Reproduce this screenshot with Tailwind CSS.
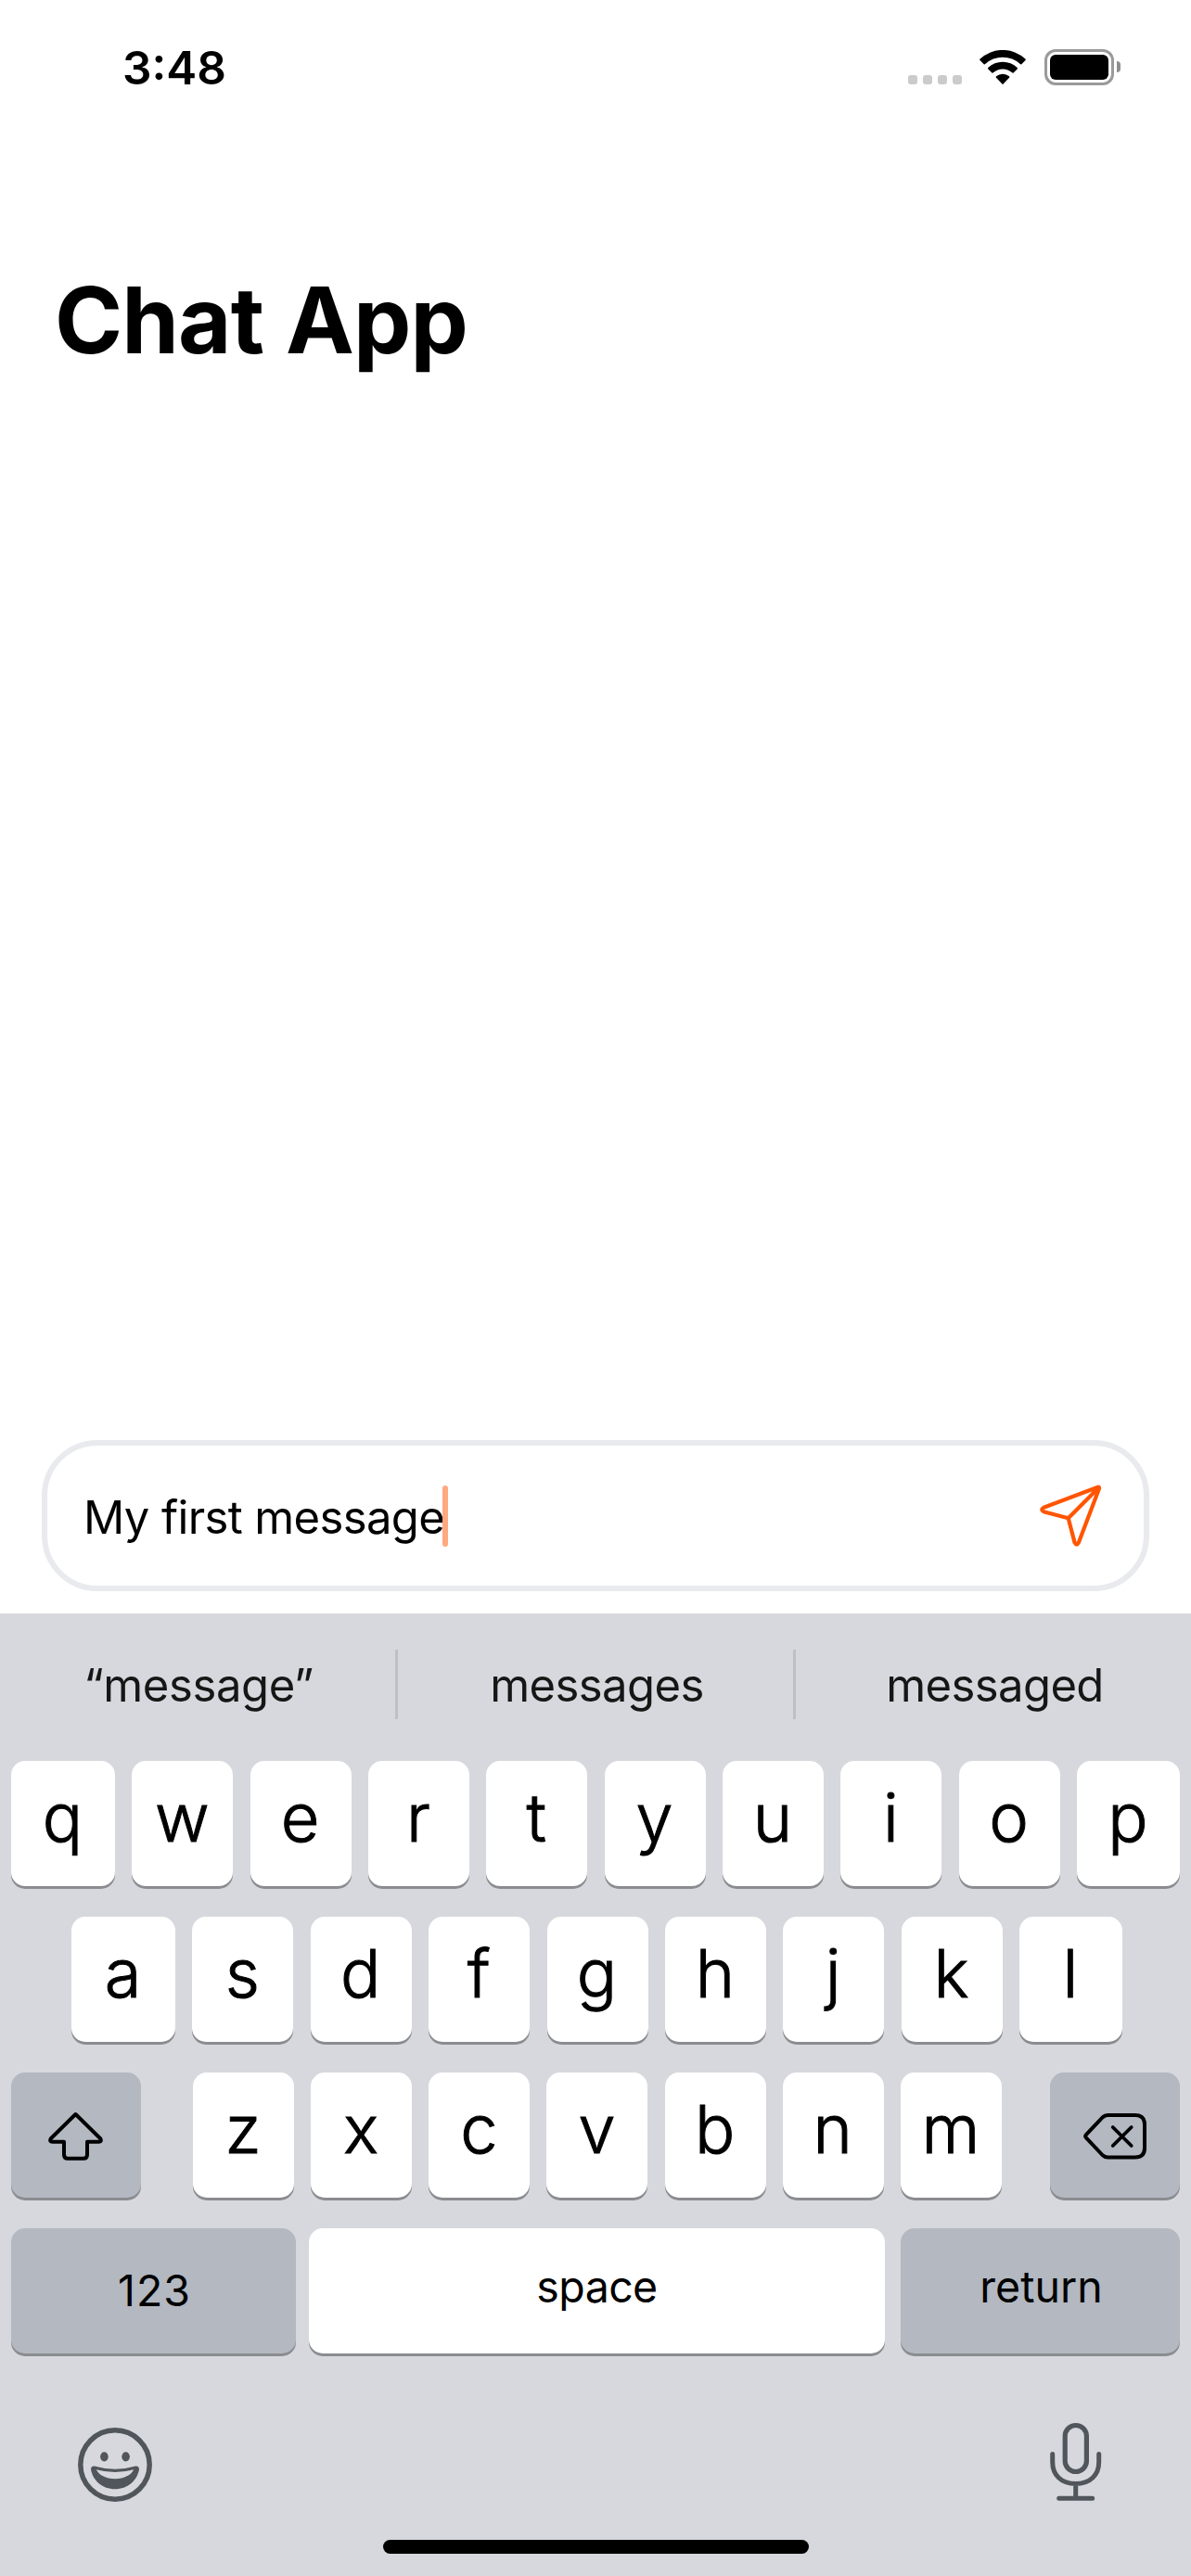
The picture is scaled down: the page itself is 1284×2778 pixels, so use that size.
<!DOCTYPE html>
<html lang="en">
<head>
<meta charset="utf-8">
<title>Chat App</title>
<script src="https://cdn.jsdelivr.net/npm/@tailwindcss/browser@4"></script>
</head>
<body class="bg-white">
<div class="flex h-[2778px] w-[1284px] flex-col overflow-hidden bg-white font-['Inter',sans-serif] text-black">

  <!-- Status bar -->
  <header class="flex h-[132px] items-start justify-between pt-[43px] pr-[76px] pl-[132px]">
    <div class="text-[49.5px] leading-[60px] font-semibold">3:48</div>
    <div class="flex pt-[10px]">
      <div class="flex gap-[6px] pt-[28px]">
        <span class="size-[10px] rounded-[3px] bg-[#cbcbcb]"></span>
        <span class="size-[10px] rounded-[3px] bg-[#cbcbcb]"></span>
        <span class="size-[10px] rounded-[3px] bg-[#cbcbcb]"></span>
        <span class="size-[10px] rounded-[3px] bg-[#cbcbcb]"></span>
      </div>
      <svg class="mt-px ml-[19px] h-[38px] w-[50px]" viewBox="0 0 50 38">
        <path d="M.6 9.6A35.5 35.5 0 0 1 49.4 9.6Q50.2 10.4 49.5 11.1L45.3 15.2Q44.6 15.8 43.8 15.1A27.5 27.5 0 0 0 6.2 15.1Q5.4 15.8 4.7 15.2L.5 11.1Q-.2 10.4 .6 9.6Z"/>
        <path d="M9.3 18.9A22.8 22.8 0 0 1 40.7 18.9Q41.4 19.7 40.7 20.4L36.6 24.4Q35.9 25 35.1 24.3A15.2 15.2 0 0 0 14.9 24.3Q14.1 25 13.4 24.4L9.3 20.4Q8.6 19.7 9.3 18.9Z"/>
        <path d="M18 28.3A10.5 10.5 0 0 1 32 28.3Q32.8 29 32.1 29.8L25.6 36.6Q25 37.2 24.4 36.6L17.9 29.8Q17.2 29 18 28.3Z"/>
      </svg>
      <div class="ml-[20px] h-[39px] w-[75px] rounded-[12px] border-[3px] border-[#9a9a9a] p-[3px]">
        <div class="size-full rounded-[6px] bg-black"></div>
      </div>
      <div class="mt-[13px] ml-[3px] h-[12px] w-[4px] rounded-r-full bg-[#8e8e8e]"></div>
    </div>
  </header>

  <h1 class="mt-[153px] ml-[59px] text-[99px] leading-[120px] font-bold tracking-[-0.9px] [word-spacing:1.5px]">Chat App</h1>

  <main class="flex-1"></main>

  <!-- Message composer -->
  <div class="mr-[45px] mb-[24px] ml-[45px] flex h-[163px] shrink-0 items-center justify-between rounded-[60px] border-[6px] border-[#e9eaee] pr-[45px] pl-[39px]">
    <div class="flex items-center">
      <span class="pt-[5px] text-[49px] leading-[60px] tracking-[-0.63px] whitespace-nowrap">My first message</span>
      <span class="-ml-[2px] h-[66px] w-[6px] rounded-full bg-[#ffa97f]"></span>
    </div>
    <svg class="mb-px size-[68px]" viewBox="0 0 68 68" fill="none" stroke="#ff5500" stroke-width="4.2" stroke-linejoin="round">
      <path d="M63.6 3.7L5.2 25.7Q1.2 28.2 5.2 30.2L31.7 37.3L38.6 63.6Q40.7 67.6 42.9 63.6L65 5.2Q65.4 3.2 63.6 3.7ZM31.7 37.3L64.6 4.2"/>
    </svg>
  </div>

  <!-- Keyboard -->
  <div class="h-[1038px] shrink-0 bg-[#d7d8dd]">
    <div class="flex h-[159px] items-start pt-[39px] text-[49px] leading-[77px] tracking-[-0.6px] text-[#161616]">
      <div class="w-[426px] pl-[2px] text-center tracking-[-0.4px]">“message”</div>
      <div class="h-[75px] w-[3px] bg-[#bfc0c5]"></div>
      <div class="w-[426px] pl-[3px] text-center">messages</div>
      <div class="h-[75px] w-[3px] bg-[#bfc0c5]"></div>
      <div class="w-[426px] pl-[3px] text-center">messaged</div>
    </div>

    <div id="keys" class="flex flex-col gap-[33px] px-[12px]">
      <div class="flex h-[135px] justify-between" data-keys="qwertyuiop"></div>
      <div class="flex h-[135px] justify-between pr-[62px] pl-[65px]" data-keys="asdfghjkl"></div>
      <div class="flex h-[135px] justify-between">
        <div class="flex w-[140px] items-center justify-center rounded-[15px] bg-[#b3b8c1] pt-[3px] shadow-[0_3px_0_#8b8c90]">
          <svg class="h-[56px] w-[62px]" viewBox="0 0 62 56" fill="none" stroke="#000" stroke-width="4" stroke-linejoin="round">
            <path d="M30.5 4L3.8 30.2Q2 33.7 5.5 33.7H18V47.5Q18 51.8 22 51.8H39Q43 51.8 43 47.5V33.7H55.5Q59 33.7 57.2 30.2Z"/>
          </svg>
        </div>
        <div class="ml-[4px] flex w-[872px] justify-between" data-keys="zxcvbnm"></div>
        <div class="flex w-[140px] items-center justify-center rounded-[15px] bg-[#b3b8c1] pt-[3px] shadow-[0_3px_0_#8b8c90]">
          <svg class="h-[56px] w-[72px]" viewBox="0 0 72 56" fill="none" stroke="#000" stroke-width="4" stroke-linejoin="round" stroke-linecap="round">
            <path d="M28.5 5H57.5Q68 5 68 15V40.5Q68 50.5 57.5 50.5H28.5Q25 50.5 22.5 48L4.9 29.3Q3.5 27.7 4.9 26.2L22.5 7.5Q25 5 28.5 5Z"/>
            <path d="M33.7 18L53.7 38M53.7 18L33.7 38" stroke-width="3.8"/>
          </svg>
        </div>
      </div>
      <div class="flex h-[135px] text-[46.5px] leading-[60px]">
        <div class="flex w-[307px] items-center justify-center rounded-[15px] bg-[#b3b8c1] pb-[2px] pl-[2px] tracking-[1px] shadow-[0_3px_0_#8b8c90]">123</div>
        <div class="ml-[14px] flex w-[621px] items-center justify-center rounded-[15px] bg-white pb-[10px] tracking-[-0.6px] shadow-[0_3px_0_#8b8c90]">space</div>
        <div class="ml-[17px] flex w-[301px] items-center justify-center rounded-[15px] bg-[#b3b8c1] pb-[10px] pl-[2px] shadow-[0_3px_0_#8b8c90]">return</div>
      </div>
    </div>

    <div class="flex justify-between pt-[74px] pr-[94px] pl-[84px]">
      <svg class="mt-[6px] size-[80px]" viewBox="0 0 80 80" fill="#50565b">
        <circle cx="40" cy="40" r="37.2" fill="none" stroke="#50565b" stroke-width="5.5"/>
        <ellipse cx="28.4" cy="31.3" rx="4.3" ry="5.1"/>
        <ellipse cx="51.6" cy="31.3" rx="4.3" ry="5.1"/>
        <path fill-rule="evenodd" d="M14 45Q14 41 18 41.5Q40 48 62 41.5Q66 41 66 45C64 57 53.500 66.300 40 66.300S16 57 14 45ZM19.800 45.300C22.500 51 30 55.200 40 55.200S57.500 51 60.200 45.300Q40 50.800 19.800 45.300Z"/>
      </svg>
      <svg class="h-[88px] w-[60px]" viewBox="0 0 60 88" fill="none" stroke="#50565b" stroke-width="5" stroke-linecap="round">
        <rect x="18.200" y="3.500" width="23.200" height="50" rx="11.600" stroke-width="5.200"/>
        <path d="M4.700 34.500V43C4.700 57 14 66.500 29.700 66.500S54.700 57 54.700 43V34.500M29.700 67V82M11.700 82.200H47.700"/>
      </svg>
    </div>
    <div class="mt-[39px] ml-[413px] h-[15px] w-[459px] rounded-full bg-black"></div>
  </div>
</div>

<script>
  // Fill each letter row; the outermost keys of the two long rows are slightly wider.
  document.querySelectorAll('[data-keys]').forEach((row) => {
    const letters = [...row.dataset.keys];
    letters.forEach((letter, i) => {
      const key = document.createElement('div');
      const wide = letters.length > 7;
      const width = wide && i === 0 ? 'w-[112px]' : wide && i === letters.length - 1 ? 'w-[111px]' : 'w-[109px]';
      key.className = 'flex items-center justify-center rounded-[15px] bg-white pr-px pb-[14px] text-[72px] leading-[90px] font-light [-webkit-text-stroke:1px_black] shadow-[0_3px_0_#8b8c90] ' + width;
      key.textContent = letter;
      row.append(key);
    });
  });
</script>
</body>
</html>
